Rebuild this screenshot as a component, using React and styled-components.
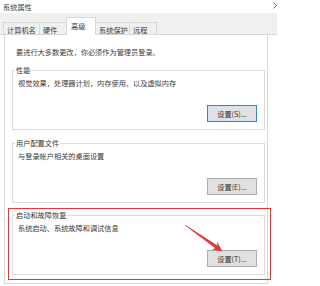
import React from 'react';
import styled, { createGlobalStyle } from 'styled-components';

const GlobalStyle = createGlobalStyle`
  html, body {
    margin: 0;
    padding: 0;
    background: #fff;
  }
  body {
    font-family: "Noto Sans CJK SC", "Noto Sans", sans-serif;
    color: #333;
  }
`;

const Window = styled.div`
  position: relative;
  width: 277px;
  height: 286px;
  overflow: hidden;
  background: #fff;
  font-size: 7.2px;
  line-height: 10px;
`;

const TitleBar = styled.div`
  height: 13px;
  display: flex;
  align-items: center;
  justify-content: space-between;
  padding-left: 3px;
  color: #3a3a3a;
`;

const CloseIcon = styled.svg`
  width: 7px;
  height: 7px;
  margin-right: -3px;
  margin-top: -2px;
`;

const TabStrip = styled.div`
  height: 21px;
  background: #f0f0f0;
  border-bottom: 1px solid #d9d9d9;
  display: flex;
  align-items: flex-end;
  padding-left: 4px;
`;

const Tab = styled.div`
  box-sizing: border-box;
  width: ${(p) => p.width}px;
  height: ${(p) => (p.active ? 18 : 13)}px;
  margin-bottom: -1px;
  margin-left: -1px;
  padding-left: ${(p) => (p.active ? 4 : 3)}px;
  padding-top: ${(p) => (p.active ? 3 : 2)}px;
  background: ${(p) => (p.active ? '#fff' : '#f0f0f0')};
  border: 1px solid #d9d9d9;
  border-bottom-color: ${(p) => (p.active ? '#fff' : '#d9d9d9')};
  position: relative;
  z-index: ${(p) => (p.active ? 1 : 0)};
  white-space: nowrap;
  color: #3a3a3a;
`;

const Panel = styled.div`
  box-sizing: border-box;
  width: 264px;
  margin-left: 4px;
  border: 1px solid #d9d9d9;
  border-top: none;
  padding: 12px 2px 8px 7px;
`;

const Notice = styled.div`
  margin-left: 4px;
  color: #3a3a3a;
`;

const Group = styled.fieldset`
  margin: ${(p) => p.gap}px 0 0;
  padding: 3px 7px 7px 5px;
  border: 1px solid #dcdcdc;
  display: flex;
  flex-direction: column;
  min-width: 0;
`;

const Legend = styled.legend`
  margin-left: -3px;
  padding: 0 1px;
  line-height: 10px;
  color: #3a3a3a;
`;

const Desc = styled.div`
  color: #3a3a3a;
`;

const Button = styled.button`
  align-self: flex-end;
  box-sizing: border-box;
  width: 50px;
  height: 17px;
  margin-top: 17px;
  padding: 0;
  font: inherit;
  color: #333;
  background: #e1e1e1;
  border: 1px solid ${(p) => (p.focused ? '#2f86d6' : '#adadad')};
  box-shadow: ${(p) => (p.focused ? 'inset 0 0 0 1px #cfe3f5' : 'none')};
`;

const Highlight = styled.div`
  position: absolute;
  left: 8px;
  top: 208px;
  width: 263px;
  height: 72px;
  box-sizing: border-box;
  border: 1.5px solid #e03a3e;
  pointer-events: none;
`;

const ArrowLayer = styled.svg`
  position: absolute;
  left: 0;
  top: 0;
  width: 277px;
  height: 286px;
  pointer-events: none;
`;

const tabs = [
  { label: '计算机名', width: 37 },
  { label: '硬件', width: 28 },
  { label: '高级', width: 30, active: true },
  { label: '系统保护', width: 35 },
  { label: '远程', width: 28 },
];

const groups = [
  { title: '性能', desc: '视觉效果，处理器计划，内存使用，以及虚拟内存', btn: '设置(S)...', gap: 8, focused: true },
  { title: '用户配置文件', desc: '与登录帐户相关的桌面设置', btn: '设置(E)...', gap: 8 },
  { title: '启动和故障恢复', desc: '系统启动、系统故障和调试信息', btn: '设置(T)...', gap: 7 },
];

export default function App() {
  return (
    <Window>
      <GlobalStyle />
      <TitleBar>
        <span>系统属性</span>
        <CloseIcon viewBox="0 0 7 7">
          <path d="M0.5 0.5 L6.5 6.5 M6.5 0.5 L0.5 6.5" stroke="#555" strokeWidth="0.8" />
        </CloseIcon>
      </TitleBar>
      <TabStrip>
        {tabs.map((t) => (
          <Tab key={t.label} width={t.width} active={t.active}>
            {t.label}
          </Tab>
        ))}
      </TabStrip>
      <Panel>
        <Notice>要进行大多数更改，你必须作为管理员登录。</Notice>
        {groups.map((g) => (
          <Group key={g.title} gap={g.gap}>
            <Legend>{g.title}</Legend>
            <Desc>{g.desc}</Desc>
            <Button focused={g.focused}>{g.btn}</Button>
          </Group>
        ))}
      </Panel>

      {/* annotation overlay */}
      <Highlight />
      <ArrowLayer viewBox="0 0 277 286">
        <polygon
          points="185.2,224.8 217.3,245.6 217.2,241.8 222.5,251.5 211.8,249.5 215.3,248.2 184.8,225.2"
          fill="#e5373c"
        />
      </ArrowLayer>
    </Window>
  );
}
